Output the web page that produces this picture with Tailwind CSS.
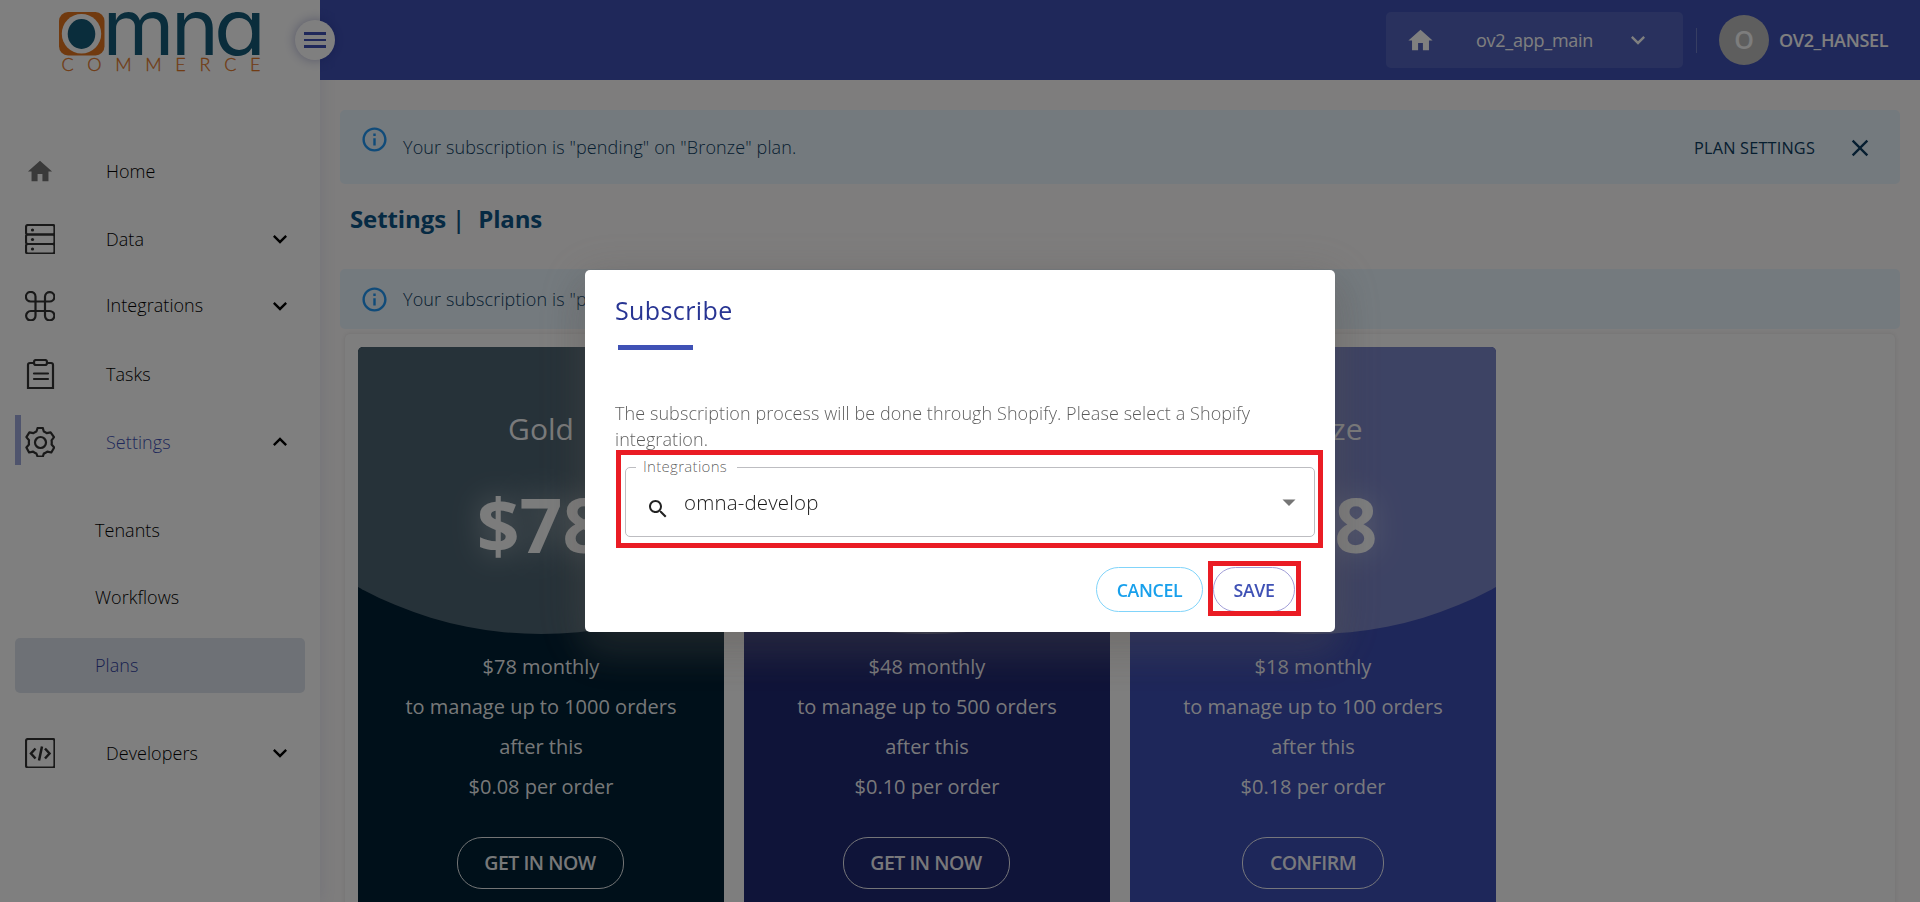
<!DOCTYPE html>
<html lang="en">
<head>
<meta charset="utf-8">
<title>Omna Commerce - Plans</title>
<script src="https://cdn.jsdelivr.net/npm/@tailwindcss/browser@4"></script>
</head>
<body class="w-[1920px] h-[902px] overflow-hidden bg-[#fcfafa] font-['Open_Sans',sans-serif]">
<svg class="hidden">
  <symbol id="home" viewBox="0 0 24 24"><path d="M10 20v-6h4v6h5v-8h3L12 3 2 12h3v8z"/></symbol>
  <symbol id="down" viewBox="0 0 24 24"><path d="M7.41 8.59 12 13.17l4.59-4.58L18 10l-6 6-6-6z"/></symbol>
  <symbol id="info" viewBox="0 0 24 24"><path d="M11 7h2v2h-2zm0 4h2v6h-2zm1-9C6.48 2 2 6.48 2 12s4.480 10 10 10 10-4.480 10-10S17.520 2 12 2zm0 18c-4.410 0-8-3.590-8-8s3.590-8 8-8 8 3.590 8 8-3.590 8-8 8z"/></symbol>
</svg>
<div class="flex h-[902px]">
  <aside class="relative z-10 w-[320px] shrink-0 bg-white shadow-[0_0_16px_rgba(63,81,181,0.12)] flex flex-col">
    <div class="h-[137px] shrink-0">
      <svg class="ml-[50px] overflow-visible" width="220" height="80" viewBox="50 0 220 80">
        <rect x="59" y="12" width="45.500" height="43.500" rx="9" fill="#e2751f"/>
        <circle cx="81.500" cy="33.700" r="19.700" fill="#fff"/>
        <ellipse cx="81.500" cy="34" rx="13.800" ry="15" fill="#145a78"/>
        <g fill="#145a78" font-family="Inter" font-size="77" font-weight="370" style="font-feature-settings:'cv11'">
          <text x="102.500" y="55" textLength="72" lengthAdjust="spacingAndGlyphs">m</text>
          <text x="171" y="55" textLength="48" lengthAdjust="spacingAndGlyphs">n</text>
          <text x="214" y="55" textLength="52" lengthAdjust="spacingAndGlyphs">a</text>
        </g>
        <text x="61.500" y="71" font-family="Lato" font-weight="300" font-size="18" textLength="199" fill="#e2751f" stroke="#e2751f" stroke-width="0.300">COMMERCE</text>
      </svg>
    </div>
    <nav class="flex flex-col text-[18px] font-light tracking-[0.050px] text-black [&_.row]:flex [&_.row]:items-center [&_.row]:shrink-0 [&_.row]:pl-[25px] [&_.row]:pr-[26px]">
      <div class="row h-[68px]"><svg class="w-[30px] h-[29px] fill-[#757575]"><use href="#home"/></svg><span class="ml-[51px]">Home</span></div>
      <div class="row h-[68px]">
        <svg class="w-[30px] h-[30px]" viewBox="0 0 30 30" fill="none" stroke="#333" stroke-width="2.200"><rect x="1" y="1" width="28.500" height="9.500" rx="2"/><rect x="1" y="10.500" width="28.500" height="9.500" rx="2"/><rect x="1" y="20" width="28.500" height="9.500" rx="2"/><g fill="#333" stroke="none"><circle cx="7.500" cy="6" r="1.600"/><circle cx="7.500" cy="15.500" r="1.600"/><circle cx="7.500" cy="25" r="1.600"/></g></svg>
        <span class="ml-[51px] grow">Data</span><svg class="w-[28px] h-[28px] fill-black" viewBox="0 0 24 24"><use href="#down"/></svg></div>
      <div class="row h-[65px]">
        <svg class="w-[30px] h-[30px]" viewBox="0 0 30 30" fill="none" stroke="#333" stroke-width="2.200"><path d="M10.500 5.500v19a4.700 4.700 0 1 1-4.700-4.500h18.700a4.700 4.700 0 1 1-4.500 4.500v-19a4.700 4.700 0 1 1 4.500 5H5.800a4.800 4.800 0 1 1 4.700-5z"/></svg>
        <span class="ml-[51px] grow">Integrations</span><svg class="w-[28px] h-[28px] fill-black" viewBox="0 0 24 24"><use href="#down"/></svg></div>
      <div class="row mt-px h-[70px]">
        <svg class="w-[30px] h-[30px]" viewBox="0 0 30 30" fill="none" stroke="#333" stroke-width="2.200"><path d="M9 4H5a2 2 0 0 0-2 2v23.200h25V6a2 2 0 0 0-2-2h-4M9 14.500h14M9 20h14" stroke-linecap="round"/><rect x="9" y="1" width="13" height="5" rx="2"/></svg>
        <span class="ml-[51px]">Tasks</span></div>
      <div class="flex items-center h-[66px] pl-[15px] pr-[26px] text-[#3f51b5]">
        <span class="w-[6px] h-[50px] -mt-[4px] bg-[#9fa8da]"></span>
        <svg class="ml-[4px] w-[30px] h-[30px]" viewBox="0 0 30 30" fill="none" stroke="#333" stroke-width="2.200" stroke-linejoin="round"><circle cx="15.500" cy="15.500" r="5.500"/><path d="M12.600 1h5.200l1 3.500q1.600.6 2.900 1.600L25.600 5.300l3.400 4.800-2.400 3.200q.3 2.100 0 4.200l2.600 3-2.900 5-4-.9q-1.700 1.300-3.500 2l-1 3h-5.200l-1.200-3q-1.700-.7-3.300-2l-4 .9-2.700-5 2.600-3q-.3-2.100 0-4.200L1.400 10.100l3-4.800 4 .8q1.500-1 3-1.600z"/></svg>
        <span class="ml-[51px] grow">Settings</span><svg class="w-[28px] h-[28px] fill-black rotate-180" viewBox="0 0 24 24"><use href="#down"/></svg></div>
      <div class="mt-[22px] h-[66px] flex items-center pl-[95px]">Tenants</div>
      <div class="h-[68px] flex items-center pl-[95px]">Workflows</div>
      <div class="mt-[7px] mx-[15px] h-[55px] flex items-center pl-[80px] rounded-[5px] bg-[#dde3ec] text-[#303f9f]">Plans</div>
      <div class="row mt-[26px] h-[68px]">
        <svg class="w-[30px] h-[30px]" viewBox="0 0 30 30" fill="none" stroke="#333" stroke-width="2.200"><rect x="1" y="1" width="28.500" height="28.500" rx="2"/><path d="m10.500 10.500-4.500 5 4.500 5m9.500-10 4.500 5-4.500 5M17 8.500l-3 14" stroke-width="2.500"/></svg>
        <span class="ml-[51px] grow">Developers</span><svg class="w-[28px] h-[28px] fill-black" viewBox="0 0 24 24"><use href="#down"/></svg></div>
    </nav>
    <div class="absolute left-[295px] top-[20px] w-[40px] h-[40px] rounded-full bg-white shadow-[0_0_12px_rgba(26,35,126,0.35)] flex flex-col items-center justify-center gap-[4px]">
      <span class="w-[22px] h-[2.500px] bg-[#3f51b5]"></span><span class="w-[22px] h-[2.500px] bg-[#3f51b5]"></span><span class="w-[22px] h-[2.500px] bg-[#3f51b5]"></span>
    </div>
  </aside>
  <div class="w-[1600px] flex flex-col">
    <header class="h-[80px] shrink-0 bg-[#3f51b5] flex items-center justify-end text-white pr-[30px]">
      <div class="w-[297px] h-[56px] rounded-[5px] bg-white/10 flex items-center pl-[20px] pr-[31px] text-[18px]">
        <svg class="w-[29px] h-[29px] fill-white"><use href="#home"/></svg><span class="ml-[41px] grow font-[450] tracking-[-0.250px]">ov2_app_main</span>
        <svg class="w-[28px] h-[28px] fill-white" viewBox="0 0 24 24"><use href="#down"/></svg>
      </div>
      <span class="ml-[13px] w-px h-[25px] bg-white/25"></span>
      <span class="ml-[22px] w-[50px] h-[50px] rounded-full bg-[#bdbdbd] text-[#fafafa] text-[25px] font-semibold flex items-center justify-center">O</span>
      <span class="ml-[10px] w-[111px] text-[18px] font-[650] tracking-[-0.350px]">OV2_HANSEL</span>
    </header>
    <main class="pl-[20px] pr-[20px] pt-[30px]">
      <div class="h-[74px] rounded-[5px] bg-[#e8f4fd] text-[#0d3c61] text-[18px] font-light tracking-[0.125px] flex items-center pl-[20px] pr-[26px]">
        <svg class="w-[29px] h-[29px] fill-[#2196f3] -mt-[15px]"><use href="#info"/></svg>
        <span class="ml-[14px] mt-px grow">Your subscription is "pending" on "Bronze" plan.</span>
        <span class="mt-[2px] text-[16.250px] font-[500] tracking-[0.200px]">PLAN SETTINGS</span>
        <svg class="ml-[31px] mt-px w-[28px] h-[28px] fill-[#0d3c61]" viewBox="0 0 24 24"><path d="M19 6.410 17.590 5 12 10.590 6.410 5 5 6.410 10.590 12 5 17.590 6.410 19 12 13.410 17.590 19 19 17.590 13.410 12z"/></svg>
      </div>
      <h1 class="h-[85px] pl-[10px] pt-[17px] text-[24px] leading-[36px] font-bold text-[#0c5486]"><span class="tracking-[-0.100px]">Settings</span><span class="ml-[6px] font-semibold">|</span><span class="ml-[13px] tracking-[-0.150px]">Plans</span></h1>
      <div class="h-[60px] rounded-[5px] bg-[#e8f4fd] text-[#0d3c61] text-[18px] font-light tracking-[0.125px] flex items-center pl-[20px]">
        <svg class="w-[29px] h-[29px] fill-[#2196f3]"><use href="#info"/></svg>
        <span class="ml-[14px]">Your subscription is "pending" on "Bronze" plan.</span>
      </div>
      <section class="mt-[5px] mx-[5px] h-[600px] pt-[13px] pl-[13px] rounded-[5px] bg-[#fdfcfc] shadow-[0_0_4px_rgba(0,0,0,0.1)] flex gap-[20px] text-white/95 text-center">
        <article class="w-[366px] rounded-[5px] overflow-hidden bg-[#002034]">
          <div class="h-[287px] pt-[62px] bg-[#4d6472] [clip-path:circle(380px_at_50%_-93px)]"><h2 class="text-[30px] leading-[40px]">Gold</h2><p class="mt-[30px] text-[75px] leading-[90px] font-bold [text-shadow:0_0_30px_rgba(255,255,255,0.5)]">$78</p></div>
          <div class="pt-[13px] text-[20px] leading-[40px] font-[430] flex flex-col items-center"><p>$78 monthly</p><p>to manage up to 1000 orders</p><p>after this</p><p>$0.08 per order</p><button class="mr-[2px] mt-[30px] w-[167px] h-[52px] rounded-[25px] border border-white/90 font-[650] text-[19.500px] tracking-[-0.500px]">GET IN NOW</button></div>
        </article>
        <article class="w-[366px] rounded-[5px] overflow-hidden bg-[#1f2872]">
          <div class="h-[287px] pt-[62px] bg-[#636996] [clip-path:circle(380px_at_50%_-93px)]"><h2 class="text-[30px] leading-[40px]">Silver</h2><p class="mt-[30px] text-[75px] leading-[90px] font-bold [text-shadow:0_0_30px_rgba(255,255,255,0.5)]">$48</p></div>
          <div class="pt-[13px] text-[20px] leading-[40px] font-[430] flex flex-col items-center"><p>$48 monthly</p><p>to manage up to 500 orders</p><p>after this</p><p>$0.10 per order</p><button class="mr-[2px] mt-[30px] w-[167px] h-[52px] rounded-[25px] border border-white/90 font-[650] text-[19.500px] tracking-[-0.500px]">GET IN NOW</button></div>
        </article>
        <article class="w-[366px] rounded-[5px] overflow-hidden bg-[#3d4eb4]">
          <div class="h-[287px] pt-[62px] bg-[#7b86c8] [clip-path:circle(380px_at_50%_-93px)]"><h2 class="text-[30px] leading-[40px]">Bronze</h2><p class="mt-[30px] text-[75px] leading-[90px] font-bold [text-shadow:0_0_30px_rgba(255,255,255,0.5)]">$18</p></div>
          <div class="pt-[13px] text-[20px] leading-[40px] font-[430] flex flex-col items-center"><p>$18 monthly</p><p>to manage up to 100 orders</p><p>after this</p><p>$0.18 per order</p><button class="mt-[30px] w-[142px] h-[52px] rounded-[25px] border border-white/90 font-[650] text-[19.500px] tracking-[-0.500px]">CONFIRM</button></div>
        </article>
      </section>
    </main>
  </div>
</div>
<div class="fixed inset-0 z-20 bg-black/50 flex justify-center items-start pt-[270px]">
  <div class="relative w-[750px] h-[362px] rounded-[5px] bg-white px-[30px] pt-[21px] shadow-[0_9px_46px_8px_rgba(90,85,78,0.18),0_24px_38px_3px_rgba(90,85,78,0.18)]">
    <h2 class="text-[25px] leading-[38px] font-[500] tracking-[0.400px] text-[#283593]">Subscribe</h2>
    <div class="ml-[3px] mt-[16px] w-[75px] h-[5px] bg-[#3f51b5]"></div>
    <p class="mt-[50px] text-[18px] leading-[26px] font-light tracking-[0.080px] text-black/65">The subscription process will be done through Shopify. Please select a Shopify integration.</p>
    <div class="relative mt-[15px] ml-[10px] w-[690px] h-[70px] rounded-[5px] border border-[#bdbdc1] flex items-center pl-[20px] pr-[5px]">
      <span class="absolute left-[10px] -top-[12px] px-[7px] w-[101px] bg-white text-[15px] leading-[20px] font-light tracking-[0.300px] text-black/65">Integrations</span>
      <svg class="mt-[14px] w-[24px] h-[24px] fill-[#222]" viewBox="0 0 24 24"><path d="M15.500 14h-.79l-.28-.27C15.410 12.590 16 11.110 16 9.500 16 5.910 13.090 3 9.500 3S3 5.910 3 9.500 5.910 16 9.500 16c1.610 0 3.090-.59 4.230-1.570l.27.28v.79l5 4.990L20.490 19l-4.990-5zm-6 0C7.010 14 5 11.990 5 9.500S7.010 5 9.500 5 14 7.010 14 9.500 11.990 14 9.500 14z"/></svg>
      <span class="ml-[14px] mt-px text-[20.500px] font-[350] tracking-[0.150px] text-black/90 grow">omna-develop</span>
      <svg class="w-[40px] h-[30px] fill-[#757575]" viewBox="0 0 40 30"><path d="M13.500 12.500h13l-6.500 6.500z"/></svg>
    </div>
    <div class="mt-[30px] flex justify-end gap-[10px] pr-[10px] text-[17.750px] font-[650] tracking-[-0.350px]">
      <button class="w-[107px] h-[45px] pt-px rounded-[23px] border border-[#81d4fa] text-[#18a0ec]">CANCEL</button>
      <button class="w-[82px] h-[45px] pt-px rounded-[23px] border border-[#a3a0d8] text-[#3f51b5]">SAVE</button>
    </div>
    <div class="absolute left-[31px] top-[180px] w-[707px] h-[98px] border-[5px] border-[#ea1c24]"></div>
    <div class="absolute left-[623px] top-[291px] w-[93px] h-[55px] border-[5px] border-[#ea1c24]"></div>
  </div>
</div>
</body>
</html>
